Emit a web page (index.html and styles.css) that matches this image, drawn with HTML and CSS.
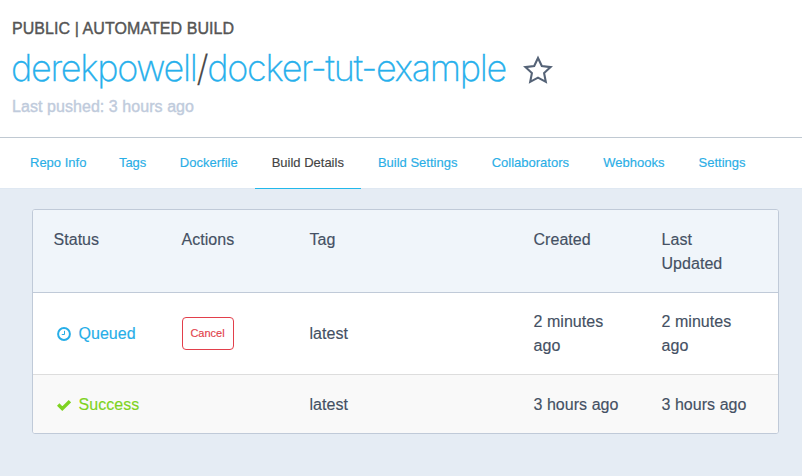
FILE: index.html
```html
<!DOCTYPE html>
<html lang="en"><head><meta charset="utf-8"><title>derekpowell/docker-tut-example</title><link rel="stylesheet" href="styles.css"></head>
<body>
<header>
<div class="kind">PUBLIC | AUTOMATED BUILD</div>
<h1><a>derekpowell</a><span class="slash">/</span><a>docker-tut-example</a>
<svg class="star" viewBox="0 0 30 30"><path d="M15 3l3.8 8 8.8 1.1-6.5 6 1.7 8.7-7.8-4.2-7.8 4.2 1.7-8.7-6.5-6 8.8-1.1z"/></svg></h1>
<div class="pushed">Last pushed: 3 hours ago</div>
</header>
<nav><a>Repo Info</a><a>Tags</a><a>Dockerfile</a><a class="active">Build Details</a><a>Build Settings</a><a>Collaborators</a><a>Webhooks</a><a>Settings</a></nav>
<main><div class="card">
<div class="row head"><span>Status</span><span>Actions</span><span>Tag</span><span>Created</span><span>Last Updated</span></div>
<div class="row queued"><span class="status blue"><svg viewBox="0 0 14 14"><circle cx="7" cy="7" r="5.9"/><path class="hands" d="M7.5 3.8V7.5H4.8"/></svg>Queued</span><span><button>Cancel</button></span><span>latest</span><span>2 minutes ago</span><span>2 minutes ago</span></div>
<div class="row success"><span class="status green"><svg viewBox="0 0 14 14"><path class="check" d="M1.2 6.5l4.1 4.2 7.6-7.6"/></svg>Success</span><span></span><span>latest</span><span>3 hours ago</span><span>3 hours ago</span></div>
</div></main>
</body></html>
```
FILE: styles.css
```css
*{box-sizing:border-box}
body{margin:0;height:476px;overflow:hidden;background:#e5ecf4;font:16px/24px "Liberation Sans",Arial,sans-serif;color:#445063}
header{height:138px;padding:17px 12px 0;background:#fff;border-bottom:1px solid #c0c9d2}
.kind{height:24px;letter-spacing:.07px;-webkit-text-stroke:.4px;color:#555}
h1{display:flex;align-items:center;margin:0 0 5px -1px;height:54px;font:200 36px/54px "Inter","Liberation Sans",sans-serif;letter-spacing:-1.31px;color:#444;-webkit-text-stroke:.3px}
h1 a{color:#27b0ec}
.star{width:30px;height:30px;margin:3px 0 0 16.5px;fill:none;stroke:#556377;stroke-width:2.1}
.pushed{line-height:14px;letter-spacing:.06px;color:#c0cbdc;-webkit-text-stroke:.4px}
nav{display:flex;height:51px;background:#fff;font-size:13px;line-height:50px;padding-left:13px;color:#2aaee6;border-bottom:1px solid #dfe8f2}
nav a{height:51px;padding:0 17px;-webkit-text-stroke:.15px}
nav a:nth-child(2){margin-left:-1.5px}
nav a:nth-child(3){margin-left:-.5px}
nav a:nth-child(6),nav a:nth-child(7){margin-left:.3px}
nav .active{color:#444;border-bottom:1px solid #22b8eb}
main{padding:20px 23px 0 32px}
.card{border:1px solid #c0cad8;border-radius:3px;overflow:hidden;background:#fff}
.row{display:grid;grid-template-columns:128px 128px 224px 128px 128px;padding-left:20.5px;align-items:center;letter-spacing:.04px;-webkit-text-stroke:.15px}
.row>span{padding-right:42px}
.row>.status{padding-right:0}
.head{height:83px;background:#f0f5fa;align-items:start;padding-top:18px;border-bottom:1px solid #c0cad8}
.queued{height:82px;border-bottom:1px solid #ddd}
.success{height:58px;background:#f9f9f9;padding-top:1px}
.success>span{padding-right:0}
.status{display:flex;align-items:center}
.status svg{width:14px;height:14px;margin:0 8px 0 3px;fill:none;stroke:currentColor;stroke-width:2}
.status .hands{stroke-width:1}
.status .check{stroke-width:3.4}
.blue{color:#27aee8}.green{color:#7ed321}
button{display:block;width:52px;height:33px;border:1px solid #e23f4b;border-radius:4px;background:#fff;color:#e23f4b;font:11px "Liberation Sans",sans-serif;padding:0 0 2px}
```
